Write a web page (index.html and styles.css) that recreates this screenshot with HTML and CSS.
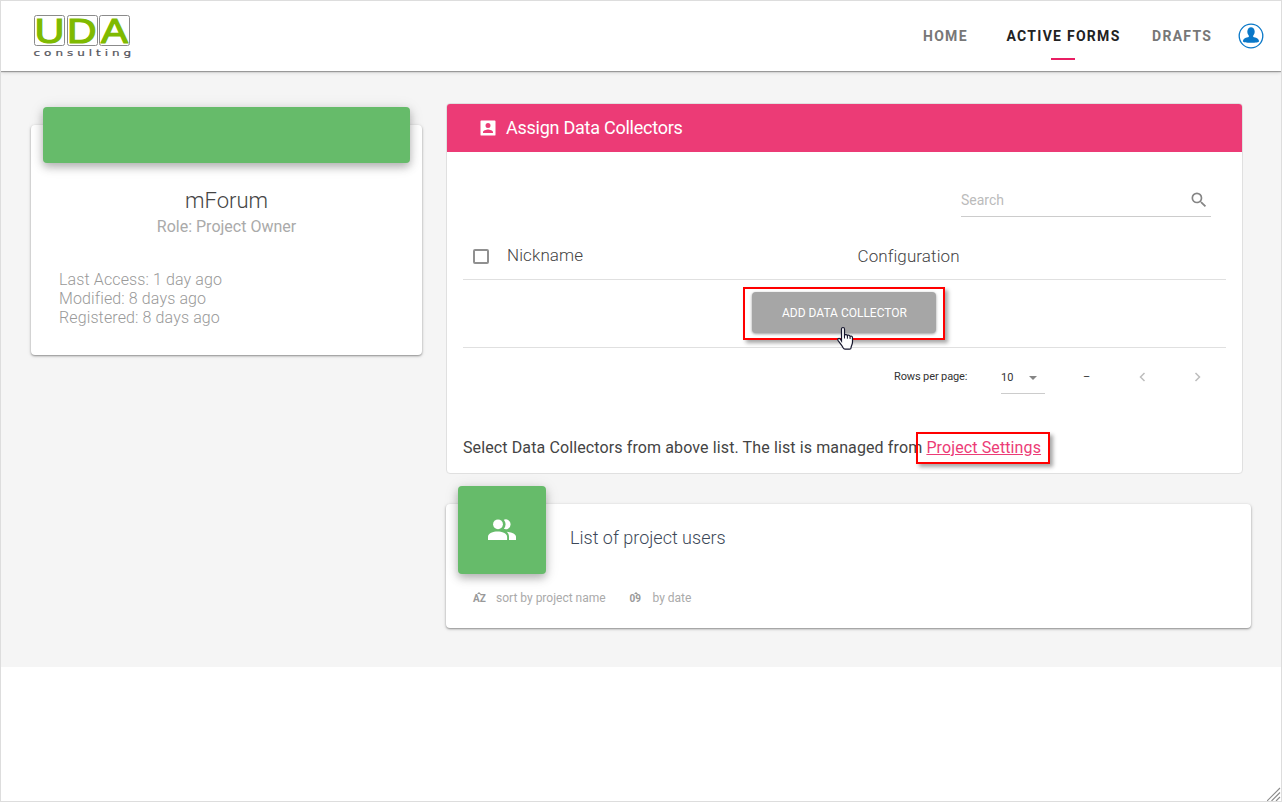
FILE: index.html
```html
<!DOCTYPE html>
<html lang="en">
<head>
<meta charset="utf-8">
<title>mForum – Active Forms</title>
<link rel="stylesheet" href="styles.css">
</head>
<body>
<div class="window">
  <header class="topbar">
    <svg class="logo" width="100" height="68" viewBox="0 -11 100 68">
      <g fill="#fff" stroke="#8b8b8b" stroke-width="1">
        <rect x="1.500" y="3.500" width="30" height="30" rx="2"/>
        <rect x="34.500" y="3.500" width="30" height="30" rx="2"/>
        <rect x="66.500" y="3.500" width="30" height="30" rx="2"/>
      </g>
      <g class="logo-letters">
        <text x="1.500" y="30.500" textLength="30" lengthAdjust="spacingAndGlyphs">U</text>
        <text x="34" y="30.500" textLength="29.500" lengthAdjust="spacingAndGlyphs">D</text>
        <text x="68" y="30.500" textLength="27" lengthAdjust="spacingAndGlyphs">A</text>
      </g>
      <text class="logo-sub" transform="scale(1.500 1)" x=".4" y="44" textLength="65" lengthAdjust="spacing">consulting</text>
    </svg>
    <nav class="nav">
      <a class="nav-item home">HOME</a>
      <a class="nav-item current">ACTIVE FORMS</a>
      <a class="nav-item drafts">DRAFTS</a>
      <svg class="avatar" width="26" height="26" viewBox="0 0 26 26">
        <circle cx="13" cy="13" r="11.800" fill="#fff" stroke="#0a78c8" stroke-width="1.300"/>
        <ellipse cx="13" cy="8.800" rx="3.700" ry="4.600" fill="#0a78c8"/>
        <path d="M10.800 12h4.400v2c2.500.6 5.800 1.300 5.800 4.300 0 1.200-3.400 1.500-8 1.500s-8-.3-8-1.500c0-3 3.300-3.700 5.800-4.300z" fill="#0a78c8"/>
      </svg>
    </nav>
  </header>

  <main class="content">
    <section class="card profile">
      <div class="banner"></div>
      <h1 class="name">mForum</h1>
      <p class="role">Role: Project Owner</p>
      <div class="facts">
        <div>Last Access: 1 day ago</div>
        <div>Modified: 8 days ago</div>
        <div>Registered: 8 days ago</div>
      </div>
    </section>

    <div class="column">
      <section class="panel">
        <h2 class="panel-head">
          <svg width="20" height="20" viewBox="0 0 24 24" fill="#fff"><path d="M3 4v16a1 1 0 0 0 1 1h16a1 1 0 0 0 1-1V4a1 1 0 0 0-1-1H4a1 1 0 0 0-1 1zm12 5a3 3 0 1 1-6 0 3 3 0 0 1 6 0zm-9 8c0-2 4-3.100 6-3.100s6 1.100 6 3.100v1H6v-1z"/></svg>
          <span>Assign Data Collectors</span>
        </h2>
        <div class="panel-body">
          <div class="search">
            <span>Search</span>
            <svg width="20" height="20" viewBox="0 0 24 24" fill="#858585"><path d="M15.500 14h-.79l-.28-.27A6.470 6.470 0 0 0 16 9.500 6.500 6.500 0 1 0 9.500 16c1.610 0 3.090-.59 4.230-1.570l.27.28v.79l5 4.990L20.490 19l-4.990-5zm-6 0C7.010 14 5 11.990 5 9.500S7.010 5 9.500 5 14 7.010 14 9.500 11.990 14 9.500 14z"/></svg>
          </div>
          <div class="table-head">
            <span class="checkbox"></span>
            <span class="col-nick">Nickname</span>
            <span class="col-conf">Configuration</span>
          </div>
          <div class="table-row">
            <div class="highlight">
              <button class="add">ADD DATA COLLECTOR</button>
              <svg class="cursor" width="19" height="25" viewBox="0 0 19 25">
                <path d="M5.500 15V3.200c0-2.300 3-2.300 3 0v6c.6-1 2.700-.8 2.900.5.700-.9 2.500-.6 2.700.7 1-.8 2.400-.1 2.400 1.200v4.500c0 2.900-1.500 3.700-1.500 5.800 0 .8-.6 1.200-1.400 1.200H9c-.9 0-1.500-.5-1.900-1.300-1.200-2.700-3.100-4.800-5-7.200-1.100-1.600.7-2.900 2.100-1.600z" fill="#fff" stroke="#15152c" stroke-width="1.200"/>
                <path d="M8.500 8v4.500M11.400 9.700v3M14.100 10.500v2.500" fill="none" stroke="#15152c" stroke-width="1"/>
              </svg>
            </div>
          </div>
          <div class="pager">
            <span class="rows-label">Rows per page:</span>
            <span class="select">10<svg width="8" height="4" viewBox="0 0 8 4"><path d="M0 0h8L4 4z" fill="#858585"/></svg></span>
            <span class="range">–</span>
            <svg class="prev" width="8" height="10" viewBox="0 0 8 10"><path d="M6.500 1l-4 4 4 4" fill="none" stroke="#bdbdbd" stroke-width="1.500"/></svg>
            <svg class="next" width="8" height="10" viewBox="0 0 8 10"><path d="m2.500 1 4 4-4 4" fill="none" stroke="#bdbdbd" stroke-width="1.500"/></svg>
          </div>
          <p class="note">Select Data Collectors from above list. The list is managed from <span class="link-wrap"><a class="link">Project Settings</a></span></p>
        </div>
      </section>

      <section class="card users">
        <div class="users-head">
          <div class="tile">
            <svg width="28" height="22" viewBox="0 0 28 22" fill="#fff">
              <path d="M15.800 9.800a4.900 4.900 0 1 0 0-9 7.200 7.200 0 0 1 0 9z"/>
              <circle cx="10" cy="5.300" r="4.900"/>
              <path d="M0 21v-3.300c0-3.400 5.200-5.200 9.500-5.200s9.600 1.800 9.600 5.200V21zM21 21v-3.300c0-2.200-.9-3.700-2.300-4.900 4.600.2 9.300 1.900 9.300 4.900V21z"/>
            </svg>
          </div>
          <h3 class="users-title">List of project users</h3>
        </div>
        <div class="sorts">
          <span class="sort-icon"><b>AZ</b><i class="caret"></i></span>
          <span class="sort-name">sort by project name</span>
          <span class="sort-icon digits"><b>09</b><i class="caret"></i></span>
          <span>by date</span>
        </div>
      </section>
    </div>
  </main>

  <svg class="grip" width="14" height="14" viewBox="0 0 14 14"><path d="M0 14 13 1M4.500 14 13 5.500M9 14l4-4" fill="none" stroke="#8b8b8b" stroke-width="1.100"/></svg>
</div>
</body>
</html>
```
FILE: styles.css
```css
*, *::before, *::after { box-sizing: border-box; }
body { margin: 0; font-family: Roboto, "Liberation Sans", sans-serif; background: #fff; }
h1, h2, h3, p { margin: 0; }

.window { position: relative; width: 1282px; height: 802px; border: 1px solid #ddd; overflow: hidden; }

.topbar { position: relative; display: flex; justify-content: space-between; height: 70px; padding-left: 32px; background: #fff; box-shadow: 0 1px 1px rgba(0,0,0,.3), 0 1px 4px rgba(0,0,0,.18); }
.logo { overflow: visible; }
.logo-letters { font: 35px "Liberation Sans", sans-serif; fill: #7fba00; stroke: #7fba00; stroke-width: 1.200px; }
.logo-sub { font: 8px "DejaVu Sans", sans-serif; fill: #55555c; stroke: #55555c; stroke-width: .200px; }
.nav { display: flex; align-items: center; padding-right: 17px; font-size: 14px; font-weight: 700; letter-spacing: 1.280px; color: #777; }
.nav-item { position: relative; line-height: 20px; white-space: nowrap; }
.home { width: 83.500px; }
.current { width: 145.500px; color: #222; }
.current::after { content: ""; position: absolute; left: 44.500px; top: 32px; width: 24px; height: 2px; background: #e91e63; }
.drafts { width: 86px; }

.content { display: flex; align-items: flex-start; gap: 24px; height: 596px; padding: 32px 30px 0; background: #f5f5f5; }
.card { background: #fff; border-radius: 4px; box-shadow: 0 1px 2px rgba(0,0,0,.36), 0 1px 4px rgba(0,0,0,.12); }
.profile { width: 391px; height: 230px; margin-top: 22px; padding: 0 12px; }
.banner { height: 56px; margin-top: -18px; border-radius: 4px; background: #66bb6a; box-shadow: 0 4px 9px rgba(0,0,0,.26), 0 2px 16px rgba(0,0,0,.1); }
.name { margin-top: 23px; font-size: 22px; font-weight: 300; line-height: 30px; text-align: center; color: #444; }
.role { font-size: 16px; line-height: 22px; text-align: center; color: #aaa; }
.facts { margin-top: 32px; padding-left: 16px; font-size: 16px; font-weight: 300; line-height: 19px; letter-spacing: .120px; color: #999; }

.column { width: 805px; }
.panel { width: 797px; height: 371px; border: 1px solid #e0e0e0; border-radius: 4px; background: #fff; }
.panel-head { display: flex; align-items: center; gap: 8px; height: 48px; padding-left: 31px; border-radius: 3px 3px 0 0; background: #ec3b76; font-size: 18px; font-weight: 400; letter-spacing: -.250px; color: #fff; }
.panel-head span { margin-top: -2px; }
.panel-body { padding: 32px 16px 0 16px; }
.search { display: flex; justify-content: space-between; align-items: center; width: 250px; height: 33px; margin-left: 498px; padding-right: 2px; border-bottom: 1px solid #ccc; font-size: 14px; color: #bbb; }
.table-head { display: flex; align-items: center; height: 63px; padding: 0 0 0 10px; border-bottom: 1px solid #e0e0e0; font-size: 17px; font-weight: 300; letter-spacing: .100px; color: #444; }
.table-head > * { margin-top: 16px; }
.checkbox { width: 16px; height: 15px; border: 2px solid #909090; border-radius: 2px; }
.table-head .col-nick { width: 350.500px; margin: 14px 0 0 18px; }
.table-row { height: 68px; padding: 7px 0 0 280px; border-bottom: 1px solid #e0e0e0; }
.highlight { position: relative; width: 202px; height: 53px; padding: 3px 7px; border: 2px solid #f00; box-shadow: 3px 3px 4px rgba(0,0,0,.35); }
.add { display: block; width: 184px; height: 41px; padding: 0 0 0 1px; border: 0; border-radius: 4px; background: #a6a6a6; box-shadow: 0 1px 3px rgba(0,0,0,.4); font: 400 12px Roboto, sans-serif; color: #fff; }
.cursor { position: absolute; left: 91px; top: 37px; }
.pager { display: flex; height: 69px; padding: 17px 0 0 431px; font-size: 11px; line-height: 24px; color: #333; }
.rows-label { width: 107px; letter-spacing: -.120px; }
.select { display: flex; align-items: center; gap: 16px; width: 44px; height: 29px; padding-bottom: 2px; border-bottom: 1px solid #ccc; }
.range { width: 55px; margin-left: 38px; }
.prev { margin-top: 7px; }
.next { margin: 7px 0 0 47px; }
.note { margin-top: 15px; font-size: 16px; line-height: 32px; letter-spacing: .116px; color: #444; white-space: nowrap; }
.link-wrap { position: relative; }
.link-wrap::before { content: ""; position: absolute; left: -10px; top: -6px; width: 134px; height: 32px; border: 2px solid #f00; box-shadow: 3px 3px 4px rgba(0,0,0,.35); }
.link { color: #ec3b76; text-decoration: underline; }

.users { height: 124px; margin-top: 30px; padding: 0 12px; }
.users-head { display: flex; gap: 24px; }
.tile { display: flex; align-items: center; justify-content: center; width: 88px; height: 88px; margin-top: -18px; border-radius: 4px; background: #66bb6a; box-shadow: 0 4px 9px rgba(0,0,0,.26), 0 2px 16px rgba(0,0,0,.1); }
.users-title { margin-top: 22px; font-size: 18px; font-weight: 300; line-height: 24px; color: #3c4858; }
.sorts { display: flex; align-items: center; height: 20px; margin-top: 14px; padding-left: 15px; font-size: 12px; color: #aaa; }
.sort-icon { position: relative; width: 23px; font-size: 10px; color: #999; }
.caret { position: absolute; left: 4px; top: -1px; border: 2.500px solid transparent; border-top: 0; border-bottom-color: #999; }
.sort-name { width: 133.500px; }

.grip { position: absolute; right: 0; bottom: 0; }
```
